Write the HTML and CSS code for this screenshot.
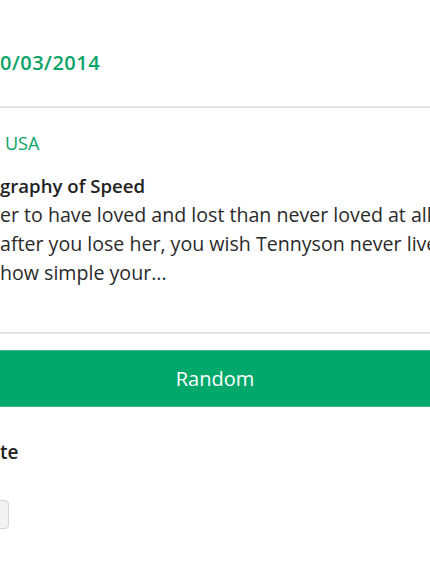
FILE: index.html
```html
<!DOCTYPE html>
<html>
<head>
<meta charset="utf-8">
<link rel="stylesheet" href="styles.css">
</head>
<body>
<div class="page">
  <div class="date-row"><span class="date">0/03/2014</span></div>
  <div class="divider"></div>
  <article class="quote">
    <div class="location">USA</div>
    <h2 class="title">graphy of Speed</h2>
    <p class="text">er to have loved and lost than never loved at all<br>after you lose her, you wish Tennyson never lived<br>how simple your...</p>
    <div class="more">.</div>
  </article>
  <div class="divider"></div>
  <button class="random">Random</button>
  <div class="vote">
    <h3 class="vote-title">te</h3>
    <div class="vote-box"></div>
  </div>
</div>
</body>
</html>
```
FILE: styles.css
```css
html, body {
  margin: 0;
  padding: 0;
  background: #fff;
  overflow: hidden;
}
.page {
  width: 430px;
  height: 570px;
  overflow: hidden;
  font-family: "Open Sans", "DejaVu Sans", sans-serif;
  color: #222;
}
.date-row {
  height: 106px;
  display: flex;
  align-items: flex-start;
  padding-top: 49px;
  box-sizing: border-box;
  white-space: nowrap;
}
.date {
  color: #0aa468;
  font-size: 20px;
  font-weight: 600;
  line-height: 28px;
  letter-spacing: 0.5px;
}
.divider {
  height: 2px;
  background: #e3e3e3;
}
.quote {
  height: 224px;
  padding-top: 22px;
  box-sizing: border-box;
  white-space: nowrap;
  overflow: hidden;
}
.location {
  color: #0aa468;
  font-size: 18px;
  line-height: 26px;
  padding-left: 5px;
}
.title {
  margin: 16px 0 0;
  font-size: 18.6px;
  font-weight: 600;
  line-height: 28px;
  color: #222;
}
.text {
  margin: 0;
  font-size: 19.6px;
  line-height: 29px;
  color: #2a2a2a;
}
.more {
  font-size: 14px;
  color: #bbb;
  margin-left: -3px;
  margin-top: 6px;
  line-height: 20px;
}
.random {
  display: block;
  width: 100%;
  margin-top: 16px;
  height: 57px;
  border: none;
  border-top: 1px solid #3db987;
  border-bottom: 1px solid #3db987;
  background: #00a96b;
  color: #fff;
  font-family: "Open Sans", "DejaVu Sans", sans-serif;
  font-size: 20px;
  padding: 0;
}
.vote {
  padding-top: 32px;
}
.vote-title {
  margin: 0;
  font-size: 19px;
  font-weight: 600;
  line-height: 26px;
  color: #222;
}
.vote-box {
  margin-top: 35px;
  margin-left: -10px;
  width: 17px;
  height: 27px;
  border: 1px solid #d6d6d6;
  border-radius: 4px;
  background: #f2f2f2;
}
```
